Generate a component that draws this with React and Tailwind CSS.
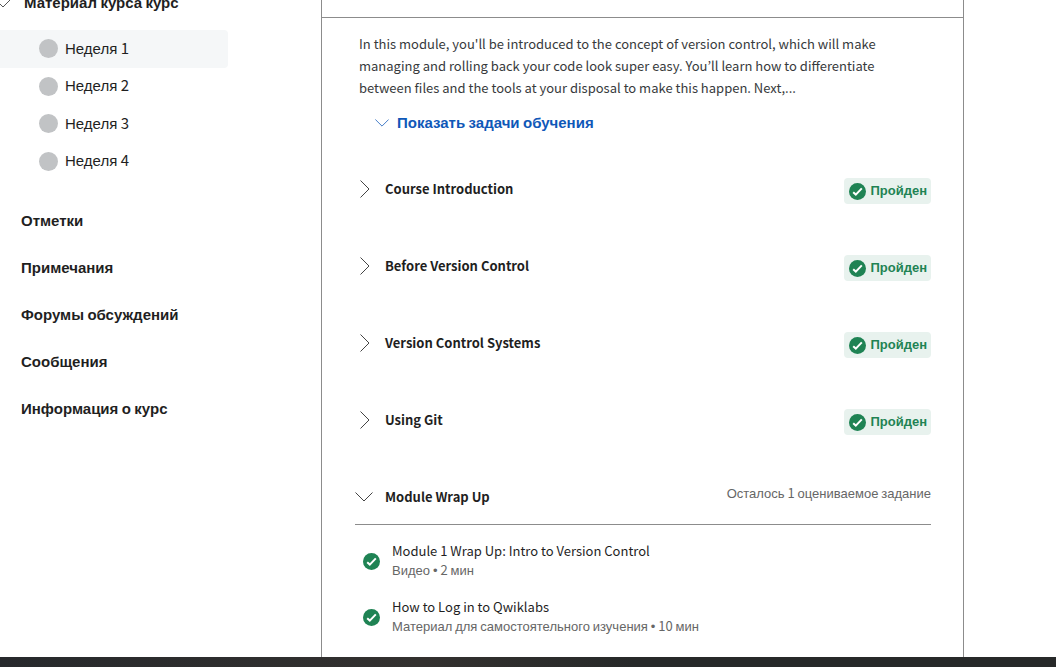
const weeks = ["Неделя 1", "Неделя 2", "Неделя 3", "Неделя 4"];
const links = ["Отметки", "Примечания", "Форумы обсуждений", "Сообщения", "Информация о курс"];
const lessons = ["Course Introduction", "Before Version Control", "Version Control Systems", "Using Git"];
const items = [
  { title: "Module 1 Wrap Up: Intro to Version Control", meta: "Видео • 2 мин" },
  { title: "How to Log in to Qwiklabs", meta: "Материал для самостоятельного изучения • 10 мин" },
];

function Mixed({ children }) {
  return (
    <span className="font-['Liberation_Sans',sans-serif]">
      {children.split(/([А-Яа-яЁё•]+)/).map((part, i) =>
        i % 2 || !part ? part : (
          <span key={i} className="font-['Noto_Sans_CJK_KR',sans-serif] leading-none">{part}</span>
        )
      )}
    </span>
  );
}

function ChevronDown({ className }) {
  return (
    <svg viewBox="0 0 18 10" className={className} fill="none" stroke="currentColor" aria-hidden="true">
      <path d="M.5.5 9 9 17.5.5" />
    </svg>
  );
}

function ChevronRight() {
  return (
    <svg viewBox="0 0 10 18" className="h-[18px] w-[10px]" fill="none" stroke="currentColor" aria-hidden="true">
      <path d="M.5.5 9 9 .5 17.5" />
    </svg>
  );
}

function Done() {
  return (
    <svg viewBox="0 0 17 17" className="size-[17px] shrink-0" aria-hidden="true">
      <circle cx="8.5" cy="8.5" r="8.5" fill="#1f8354" />
      <path d="m4.2 9.2 2.6 2.4 6-6.2" fill="none" stroke="#fff" strokeWidth="2" />
    </svg>
  );
}

export default function App() {
  return (
    <div className="flex min-h-screen flex-col overflow-hidden bg-white font-['Liberation_Sans',sans-serif] text-[#1f1f1f]">
      <div className="flex flex-1">
        <nav className="-mt-[9px] w-[228px] shrink-0" aria-label="Курс">
          <button type="button" className="flex h-6 items-center gap-3 text-[15px] leading-6 font-bold whitespace-nowrap">
            <ChevronDown className="-ml-1.5 h-[10px] w-[18px] text-[#555]" />
            <Mixed>Материал курса курс</Mixed>
          </button>
          <ul className="mt-[15px] grid h-[150px] grid-rows-4">
            {weeks.map((week, i) => (
              <li key={week}>
                <a href="#" className={`flex h-full items-center gap-[7px] rounded-r pl-[39px] text-[15px] leading-5 ${i === 0 ? "bg-[#f5f7f8]" : ""}`}>
                  <span className="size-[19px] rounded-full bg-[#c1c3c5]" />
                  <Mixed>{week}</Mixed>
                </a>
              </li>
            ))}
          </ul>
          <ul className="mt-[17px] pl-[21px] text-[15px] font-bold">
            {links.map((link) => (
              <li key={link}>
                <a href="#" className="flex h-[47px] items-center leading-5">
                  <Mixed>{link}</Mixed>
                </a>
              </li>
            ))}
          </ul>
        </nav>

        <main className="mr-[92px] ml-[93px] min-w-0 flex-1 border-x border-[#8c8c8c]">
          <div className="h-[18px] border-b border-[#8c8c8c]" />
          <div className="pr-8 pl-[33px]">
            <p className="mt-[15px] pr-4 pl-1 font-['Noto_Sans_CJK_KR',sans-serif] text-[13px] leading-[22px] text-[#373a3c]">
              In this module, you'll be introduced to the concept of version control, which will make managing and rolling back your code look super easy. You’ll learn how to differentiate between files and the tools at your disposal to make this happen. Next,...
            </p>
            <button type="button" className="mt-3 ml-5 flex h-6 items-center gap-2 text-[15px] leading-6 font-bold text-[#0f58b8]">
              <ChevronDown className="h-2 w-[14px]" />
              <Mixed>Показать задачи обучения</Mixed>
            </button>

            <div className="pt-4">
              {lessons.map((lesson) => (
                <section key={lesson} className="flex h-[77px] items-start justify-between pt-[27px]">
                  <button type="button" className="flex h-[22px] items-center font-['Noto_Sans_CJK_KR',sans-serif] text-[13px] leading-[22px] font-bold">
                    <span className="flex w-[30px] pl-[5px] text-[#444]"><ChevronRight /></span>
                    {lesson}
                  </button>
                  <span className="flex h-[26px] items-center gap-1 rounded bg-[#e8f2ee] pr-1 pl-[5px] text-[13px] font-bold text-[#1f8354]">
                    <Done />
                    <Mixed>Пройден</Mixed>
                  </span>
                </section>
              ))}
              <section>
                <div className="flex h-[66px] items-start justify-between border-b border-[#8c8c8c] pt-[27px]">
                  <button type="button" className="flex h-[22px] items-center font-['Noto_Sans_CJK_KR',sans-serif] text-[13px] leading-[22px] font-bold">
                    <span className="flex w-[30px] text-[#444]"><ChevronDown className="h-[10px] w-[18px]" /></span>
                    Module Wrap Up
                  </button>
                  <span className="text-[13px] leading-4 text-[#666]"><Mixed>Осталось 1 оцениваемое задание</Mixed></span>
                </div>
                <ul className="flex flex-col gap-4 py-4">
                  {items.map((item) => (
                    <li key={item.title}>
                      <a href="#" className="flex items-center gap-3 pl-2">
                        <Done />
                        <span className="flex flex-col">
                          <span className="font-['Noto_Sans_CJK_KR',sans-serif] text-[13px] leading-5">{item.title}</span>
                          <span className="text-[13px] leading-5 text-[#666]"><Mixed>{item.meta}</Mixed></span>
                        </span>
                      </a>
                    </li>
                  ))}
                </ul>
              </section>
            </div>
          </div>
        </main>
      </div>
      <footer className="h-[10px] bg-linear-to-r from-[#27292c] via-[#33312f] via-40% to-[#272929] to-60%" />
    </div>
  );
}
